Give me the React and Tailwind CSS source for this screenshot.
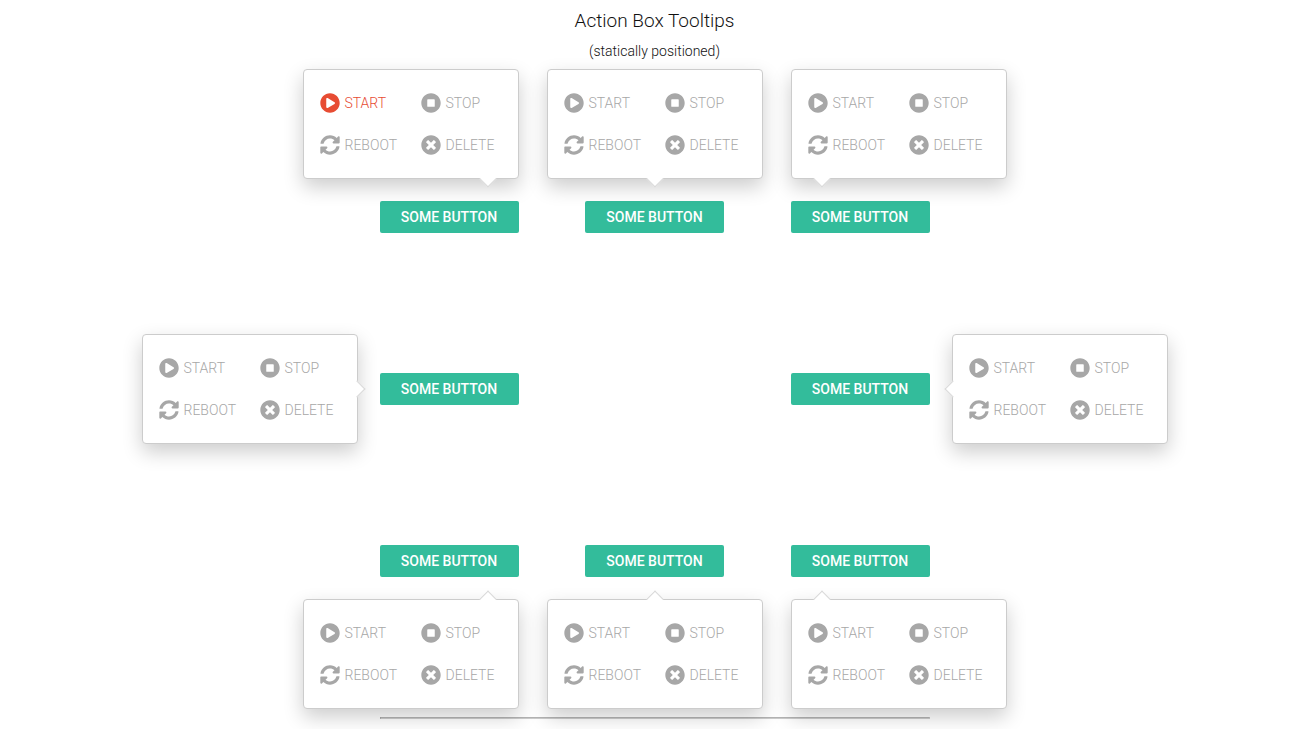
import React from "react";
import { FaPlayCircle, FaStopCircle, FaSyncAlt, FaTimesCircle } from "react-icons/fa";

const ACTIONS = [
  { label: "Start", Icon: FaPlayCircle },
  { label: "Stop", Icon: FaStopCircle },
  { label: "Reboot", Icon: FaSyncAlt },
  { label: "Delete", Icon: FaTimesCircle },
];

const BOX_PLACE = {
  topLeft: "bottom-full right-0 mb-[22px]",
  top: "bottom-full left-1/2 -translate-x-1/2 mb-[22px]",
  topRight: "bottom-full left-0 mb-[22px]",
  left: "right-full top-1/2 -translate-y-1/2 mr-[22px]",
  right: "left-full top-1/2 -translate-y-1/2 ml-[22px]",
  bottomLeft: "top-full right-0 mt-[22px]",
  bottom: "top-full left-1/2 -translate-x-1/2 mt-[22px]",
  bottomRight: "top-full left-0 mt-[22px]",
};

const ARROW_PLACE = {
  topLeft: "-bottom-[7px] right-6 border-r border-b",
  top: "-bottom-[7px] left-1/2 -translate-x-1/2 border-r border-b",
  topRight: "-bottom-[7px] left-6 border-r border-b",
  left: "-right-[6px] top-1/2 -translate-y-1/2 border-t border-r",
  right: "-left-[6px] top-1/2 -translate-y-1/2 border-b border-l",
  bottomLeft: "-top-[7px] right-6 border-t border-l",
  bottom: "-top-[7px] left-1/2 -translate-x-1/2 border-t border-l",
  bottomRight: "-top-[7px] left-6 border-t border-l",
};

function ActionBox({ place, active }) {
  return (
    <div
      role="tooltip"
      className={`absolute w-[216px] rounded border border-[#ccc] bg-white px-4 py-[23px] shadow-[0_8px_20px_rgba(0,0,0,0.2)] ${BOX_PLACE[place]}`}
    >
      <div className="grid grid-cols-[101px_1fr] gap-y-[22px]">
        {ACTIONS.map(({ label, Icon }) => (
          <button
            key={label}
            type="button"
            className={`flex h-5 items-center gap-[5px] whitespace-nowrap text-sm font-light uppercase ${
              label === active ? "text-[#e74c33]" : "text-[#a7a7a7]"
            }`}
          >
            <Icon className="size-5 shrink-0" aria-hidden="true" />
            {label}
          </button>
        ))}
      </div>
      <span className={`absolute size-3 rotate-45 border-[#d8d8d8] bg-white ${ARROW_PLACE[place]}`} />
    </div>
  );
}

function Target({ place, active }) {
  return (
    <div className="relative">
      <button
        type="button"
        className="block h-8 w-[139px] rounded-xs bg-[#33bc9b] text-center text-sm font-medium uppercase text-white"
      >
        Some button
      </button>
      <ActionBox place={place} active={active} />
    </div>
  );
}

export default function App() {
  return (
    <main className="overflow-x-clip pb-2.5 pl-1.5 font-['Roboto',sans-serif] text-[#111]">
      <header className="pt-[9px] text-center font-light">
        <h1 className="text-[19px] leading-6">Action Box Tooltips</h1>
        <p className="mt-1.5 text-sm leading-6">(statically positioned)</p>
      </header>
      <section className="mx-auto mt-[138px] flex max-w-[550px] flex-col gap-[140px]">
        <div className="flex justify-between">
          <Target place="topLeft" active="Start" />
          <Target place="top" />
          <Target place="topRight" />
        </div>
        <div className="flex justify-between">
          <Target place="left" />
          <Target place="right" />
        </div>
        <div className="flex justify-between">
          <Target place="bottomLeft" />
          <Target place="bottom" />
          <Target place="bottomRight" />
        </div>
        <hr className="h-0.5 border border-t-[#b4b4b4] border-r-[#ccc] border-b-[#ccc] border-l-[#999]" />
      </section>
    </main>
  );
}
